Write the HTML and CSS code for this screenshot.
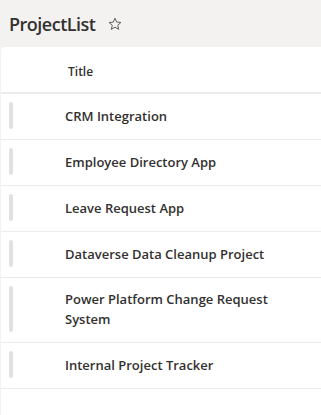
FILE: index.html
```html
<!DOCTYPE html>
<html>
<head>
    <link rel="stylesheet" href="styles.css">
</head>
<body>
    <div class="page-header">
        <h1>ProjectList</h1>
        <svg class="star" width="14" height="14" viewBox="0 0 14 14">
            <path d="M7 1.2l1.7 3.9 4.2.4-3.2 2.8 1 4.1L7 10.2l-3.7 2.2 1-4.1-3.2-2.8 4.2-.4z" fill="none" stroke="#605e5c" stroke-width="1" stroke-linejoin="round"/>
        </svg>
    </div>

    <div class="list">
        <div class="list-head">
            <span class="col-title">Title</span>
        </div>
        <div class="row">
            <div class="handle"></div>
            <div class="cell">CRM Integration</div>
        </div>
        <div class="row">
            <div class="handle"></div>
            <div class="cell">Employee Directory App</div>
        </div>
        <div class="row">
            <div class="handle"></div>
            <div class="cell">Leave Request App</div>
        </div>
        <div class="row">
            <div class="handle"></div>
            <div class="cell">Dataverse Data Cleanup Project</div>
        </div>
        <div class="row">
            <div class="handle"></div>
            <div class="cell">Power Platform Change Request System</div>
        </div>
        <div class="row">
            <div class="handle"></div>
            <div class="cell">Internal Project Tracker</div>
        </div>
    </div>
</body>
</html>
```

FILE: styles.css
```css
:root {
    --bg: #f3f2f1;
    --text: #323130;
    --line: #edebe9;
    --handle: #e1e1e1;
}

* {
    margin: 0;
    padding: 0;
    box-sizing: border-box;
}

body {
    font-family: 'Open Sans', 'Noto Sans', sans-serif;
    background: var(--bg);
    color: var(--text);
    min-height: 100vh;
    display: flex;
    flex-direction: column;
}

.page-header {
    height: 47px;
    display: flex;
    align-items: center;
    gap: 13px;
    padding-left: 9px;
    padding-top: 1px;
}

.page-header h1 {
    font-size: 18px;
    font-weight: 600;
    letter-spacing: -0.5px;
}

.star {
    display: block;
}

.list {
    flex: 1;
    background: #fff;
    margin-left: 1px;
    border-top-left-radius: 4px;
}

.list-head {
    height: 47px;
    display: flex;
    align-items: center;
    padding-left: 67px;
    padding-top: 3px;
    border-bottom: 2px solid var(--line);
}

.col-title {
    font-size: 12px;
    font-weight: 600;
}

.row {
    display: flex;
    min-height: 46px;
    border-bottom: 1px solid var(--line);
}

.handle {
    width: 4px;
    margin: 8px 0 10px 8px;
    border-radius: 2px;
    background: var(--handle);
}

.cell {
    width: 230px;
    margin-left: 52px;
    padding: 11px 0 13px;
    align-self: center;
    font-size: 13px;
    font-weight: 600;
    line-height: 20px;
}
```
